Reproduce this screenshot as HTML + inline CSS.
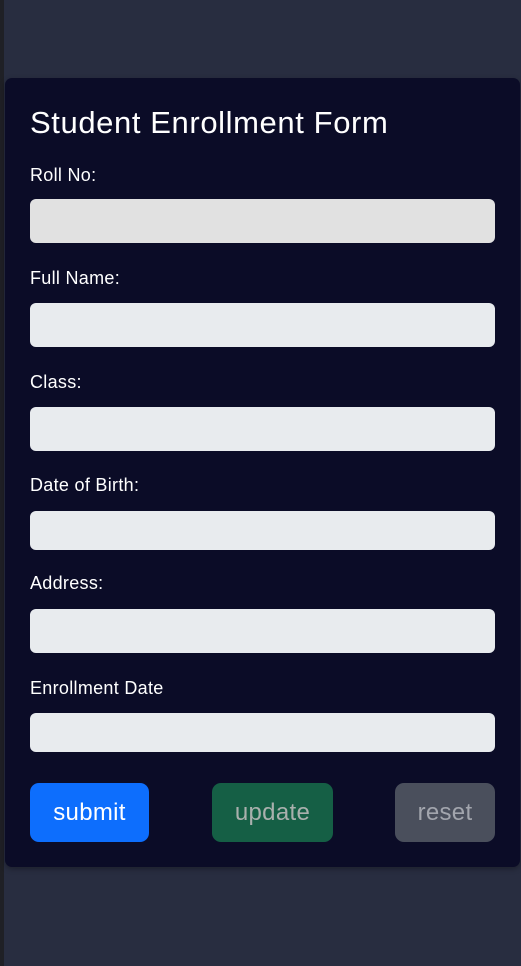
<!DOCTYPE html>
<html><head><style>
body{margin:0;width:521px;height:966px;background:#282d40;position:relative;overflow:hidden;font-family:"Liberation Sans",sans-serif}
.strip{position:absolute;left:0;top:0;width:4px;height:966px;background:#1f2026}
.card{position:absolute;left:5px;top:78px;width:515px;height:789px;background:#0b0c27;border-radius:7px;box-shadow:0 2px 6px rgba(0,0,0,.3)}
.t{position:absolute;left:30px;color:#fff;white-space:nowrap}
h1{position:absolute;left:30px;top:105px;margin:0;font-size:31px;font-weight:normal;color:#fff;line-height:36px;letter-spacing:0.6px}
.l{font-size:18px;line-height:22px;letter-spacing:0.3px}
.in{position:absolute;left:30px;width:465px;background:#e8ebee;border-radius:6px}
.b{position:absolute;top:783px;height:59px;border-radius:9px;font-size:24px;line-height:59px;text-align:center;letter-spacing:0.3px}
</style></head><body>
<div class="strip"></div>
<div class="card"></div>
<h1>Student Enrollment Form</h1>
<div class="t l" style="top:164px">Roll No:</div>
<div class="in" style="top:199px;height:44px;background:#e1e1e1"></div>
<div class="t l" style="top:267px">Full Name:</div>
<div class="in" style="top:303px;height:44px"></div>
<div class="t l" style="top:371px">Class:</div>
<div class="in" style="top:407px;height:44px"></div>
<div class="t l" style="top:474px">Date of Birth:</div>
<div class="in" style="top:511px;height:39px"></div>
<div class="t l" style="top:572px">Address:</div>
<div class="in" style="top:609px;height:44px"></div>
<div class="t l" style="top:677px">Enrollment Date</div>
<div class="in" style="top:713px;height:39px"></div>
<div class="b" style="left:30px;width:119px;background:#0d6efd;color:#fff">submit</div>
<div class="b" style="left:212px;width:121px;background:#155f45;color:#a9b0ad">update</div>
<div class="b" style="left:395px;width:100px;background:#4a4f5c;color:#a2a5ad">reset</div>
</body></html>
